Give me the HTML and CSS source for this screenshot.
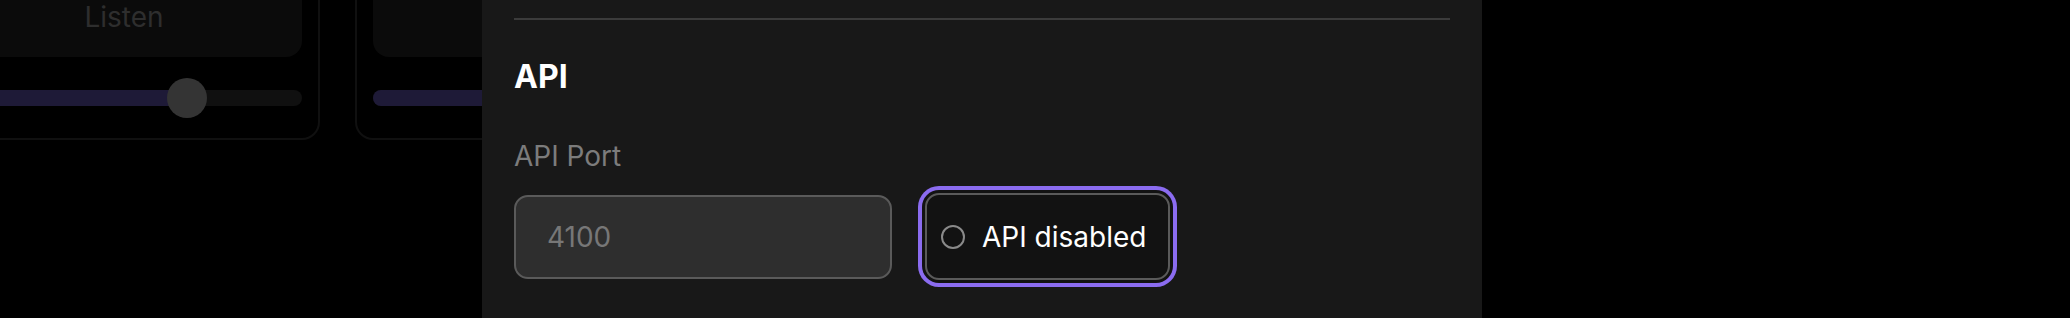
FILE: index.html
```html
<!DOCTYPE html>
<html lang="en">
<head>
    <meta charset="UTF-8">
    <meta name="viewport" content="width=device-width, initial-scale=1.0">
    <title>Settings - API</title>
    <link rel="stylesheet" href="styles.css">
</head>
<body>
    <div class="backdrop">
        <div class="cards">
            <div class="card">
                <div class="card-btn">Listen</div>
                <div class="slider">
                    <div class="track">
                        <div class="fill" style="width: 241px;">
                            <div class="thumb"></div>
                        </div>
                    </div>
                </div>
            </div>
            <!-- second card is mostly hidden behind the panel -->
            <div class="card">
                <div class="card-btn"></div>
                <div class="slider">
                    <div class="track">
                        <div class="fill" style="width: 60%;"></div>
                    </div>
                </div>
            </div>
        </div>
    </div>

    <div class="panel">
        <div class="divider"></div>
        <h2 class="section-title">API</h2>
        <label class="field-label" for="apiPort">API Port</label>
        <div class="field-row">
            <input class="port-input" id="apiPort" type="text" value="4100" disabled>
            <button class="toggle-btn" type="button">
                <span class="radio"></span>
                <span>API disabled</span>
            </button>
        </div>
    </div>
</body>
</html>
```

FILE: styles.css
```css
body {
    margin: 0;
    padding: 0;
    height: 318px;
    overflow: hidden;
    background-color: #000;
    font-family: Inter, "Noto Sans", sans-serif;
    display: flex;
}
.backdrop {
    width: 482px;
    flex: none;
    overflow: hidden;
}
.cards {
    display: flex;
    gap: 35px;
    margin-left: -72px;
    margin-top: -41px;
}
.card {
    width: 356px;
    flex: none;
    padding: 16px 16px 20px;
    border: 2px solid #101010;
    border-radius: 18px;
}
.card-btn {
    height: 80px;
    display: flex;
    align-items: center;
    justify-content: center;
    background-color: #0b0b0b;
    border-radius: 16px;
    color: #2e2e2e;
    font-size: 28px;
}
.slider {
    height: 40px;
    margin-top: 21px;
    display: flex;
    align-items: center;
}
.track {
    width: 100%;
    height: 16px;
    background-color: #101010;
    border-radius: 8px;
}
.fill {
    position: relative;
    height: 100%;
    background-color: #1e1a37;
    border-radius: 8px 0 0 8px;
}
.thumb {
    position: absolute;
    right: -20px;
    top: -12px;
    width: 40px;
    height: 40px;
    border-radius: 50%;
    background-color: #343434;
}
.panel {
    width: 936px;
    flex: none;
    padding: 0 32px;
    background-color: #181818;
}
.divider {
    height: 2px;
    margin-top: 18px;
    background-color: #3b3b3b;
}
.section-title {
    margin: 37px 0 0;
    font-size: 32px;
    line-height: 40px;
    font-weight: 700;
    color: #fff;
}
.field-label {
    display: block;
    margin-top: 41px;
    font-size: 28px;
    line-height: 36px;
    color: #7c7c7c;
}
.field-row {
    display: flex;
    align-items: flex-end;
    gap: 33px;
    margin-top: 19px;
}
.port-input {
    box-sizing: border-box;
    width: 378px;
    height: 84px;
    margin-bottom: 1px;
    padding: 0 31px;
    background-color: #2e2e2e;
    border: 2px solid #5a5a5a;
    border-radius: 14px;
    font-family: inherit;
    font-size: 28px;
    color: #777;
    outline: none;
}
.toggle-btn {
    box-sizing: border-box;
    height: 87px;
    display: flex;
    align-items: center;
    gap: 17px;
    padding: 0 22px 0 14px;
    background-color: #121212;
    border: 2px solid #5a5a5a;
    border-radius: 14px;
    box-shadow: 0 0 0 3px #121212, 0 0 0 7px #8b6cf0;
    font-family: inherit;
    font-size: 28px;
    color: #fff;
    cursor: pointer;
}
.radio {
    width: 20px;
    height: 20px;
    border: 2px solid #8a8a8a;
    border-radius: 50%;
}
```
